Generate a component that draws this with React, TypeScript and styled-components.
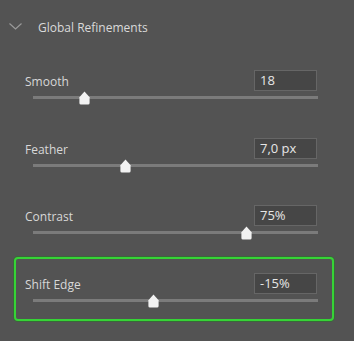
import { createGlobalStyle, styled } from "styled-components";

const GlobalStyle = createGlobalStyle`
    html, body {
        margin: 0;
        padding: 0;
        background-color: #535353;
    }
`;

type Field = {
    label: string;
    value: string;
    percent: number;
    focused?: boolean;
};

const fields: Field[] = [
    { label: "Smooth", value: "18", percent: 18 },
    { label: "Feather", value: "7,0 px", percent: 32.3 },
    { label: "Contrast", value: "75%", percent: 75 },
    { label: "Shift Edge", value: "-15%", percent: 42.2, focused: true },
];

const Thumb = () => (
    <svg width="11" height="14" viewBox="0 0 11 14">
        <path
            d="M5.5 0.5 L10.6 6.2 L10.6 12 Q10.6 13.6 9 13.6 L2 13.6 Q0.4 13.6 0.4 12 L0.4 6.2 Z"
            fill="#f2f2f2"
        />
    </svg>
);

const App = () => {
    return (
        <>
            <GlobalStyle />
            <Panel>
                <SectionHeader>
                    <svg width="13" height="7" viewBox="0 0 13 7">
                        <path d="M0.5 0.5 L6.5 6 L12.5 0.5" fill="none" stroke="#9a9a9a" strokeWidth="1.2" />
                    </svg>
                    <span>Global Refinements</span>
                </SectionHeader>
                <FieldList>
                    {fields.map((f) => (
                        <FieldRow key={f.label} $focused={f.focused}>
                            <FieldTop>
                                <FieldLabel>{f.label}</FieldLabel>
                                <ValueInput>{f.value}</ValueInput>
                            </FieldTop>
                            <Slider>
                                <Track />
                                <ThumbWrap style={{ left: `${f.percent}%` }}>
                                    <Thumb />
                                </ThumbWrap>
                            </Slider>
                        </FieldRow>
                    ))}
                </FieldList>
            </Panel>
        </>
    );
};

const Panel = styled.div`
    width: 354px;
    height: 341px;
    background-color: #535353;
    font-family: "Open Sans", "Noto Sans", sans-serif;
    box-sizing: border-box;
    padding: 0 20px 0 14px;
`;

const SectionHeader = styled.div`
    height: 54px;
    display: flex;
    align-items: center;
    gap: 16px;
    padding-left: 0;
    margin-left: -5px;
    padding-bottom: 0;
    font-size: 12px;
    color: #dadada;

    & svg {
        margin-top: -1px;
    }
`;

const FieldList = styled.div`
    display: flex;
    flex-direction: column;
    gap: 3.5px;
`;

const FieldRow = styled.div<{ $focused?: boolean }>`
    height: 64px;
    box-sizing: border-box;
    border: 2px solid ${(p) => (p.$focused ? "#36d336" : "transparent")};
    border-radius: 4px;
    box-shadow: ${(p) => (p.$focused ? "0 0 0 1px rgba(40, 120, 40, 0.6)" : "none")};
    padding: 14px 15px 0 9px;
    display: flex;
    flex-direction: column;
`;

const FieldTop = styled.div`
    display: flex;
    justify-content: space-between;
    align-items: center;
    height: 21px;
`;

const FieldLabel = styled.span`
    font-size: 12px;
    color: #d8d8d8;
    padding-top: 2px;
`;

const ValueInput = styled.div`
    width: 63px;
    height: 21px;
    box-sizing: border-box;
    border: 1px solid #666666;
    background-color: #464646;
    color: #e6e6e6;
    font-size: 13px;
    line-height: 19px;
    padding-left: 5px;
`;

const Slider = styled.div`
    position: relative;
    height: 14px;
    margin: 0 -1px 0 8px;
`;

const Track = styled.div`
    position: absolute;
    left: 0;
    right: 0;
    top: 5px;
    height: 3px;
    background-color: #7b7b7b;
`;

const ThumbWrap = styled.div`
    position: absolute;
    top: 0;
    width: 11px;
    height: 14px;
    margin-left: -5.5px;

    & svg {
        display: block;
    }
`;

export default App;
